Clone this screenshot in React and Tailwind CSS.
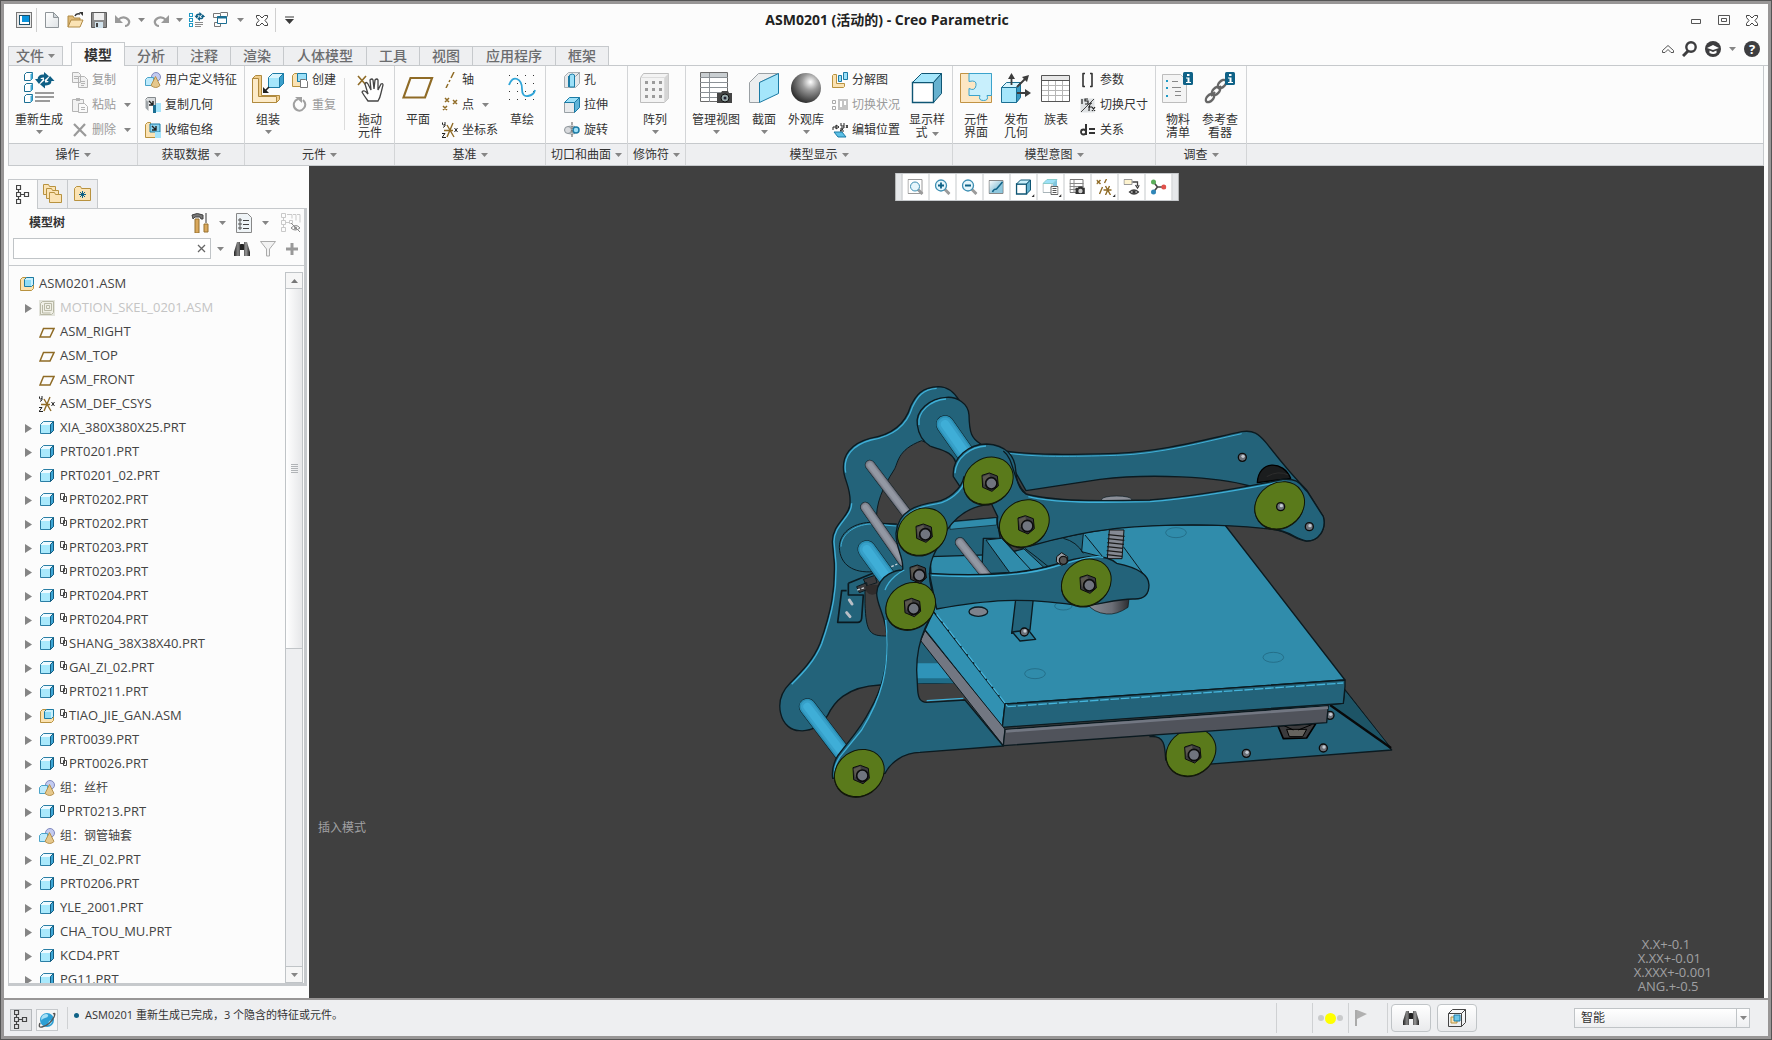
import React from "react";

const SANS = "font-['Open_Sans','Noto_Sans_CJK_SC',sans-serif]";

/* ---------- icon helpers ---------- */
const Svg = ({ w = 16, h = 16, children }) => (
  <svg width={w} height={h} viewBox={`0 0 ${w} ${h}`} className="shrink-0" aria-hidden="true" fill="none">
    {children}
  </svg>
);

const Caret = ({ dark }) => (
  <svg width="7" height="4" viewBox="0 0 7 4" className="shrink-0" aria-hidden="true">
    <path d="M0 0h7L3.5 4z" fill={dark ? "#3a3a3a" : "#858585"} />
  </svg>
);

const MiniCube = ({ x = 0, y = 0 }) => (
  <g>
    <path d={`M${x + 0.5} ${y + 2.5}l2-2h6v6l-2 2h-6z`} fill="#fff" stroke="#1b6f93" />
    <path d={`M${x + 6.5} ${y + 2.5}l2-2v6l-2 2z`} fill="#3fa9d6" />
  </g>
);

const Cycle = ({ x = 0, y = 0, s = 1 }) => (
  <g transform={`translate(${x} ${y}) scale(${s})`}>
    <path d="M3 8V6Q3 3 7 3h2" stroke="#0f5f85" strokeWidth="2.8" />
    <path d="M8 -1l5 4.200L8 7.500zM-1 6h8L3 11z" fill="#0f5f85" />
    <path d="M14 6v2q0 3-4 3H8" stroke="#0f5f85" strokeWidth="2.8" />
    <path d="M9 7v8.500L4 11.200zM10.500 8h8L14 3z" fill="#0f5f85" />
  </g>
);

const AppIcon = () => (
  <Svg>
    <rect x="0.5" y="0.5" width="15" height="15" fill="#e9e9e9" stroke="#777" />
    <rect x="3.5" y="3.5" width="10" height="9" fill="#fff" stroke="#1c4f69" />
    <rect x="6" y="4" width="7" height="6" fill="#0a94dd" />
  </Svg>
);
const NewIcon = () => (
  <Svg w={14}>
    <path d="M.5.5h8l5 5v10H.5z" fill="url(#pg)" stroke="#8f9599" />
    <path d="M8.500.5v5h5z" fill="#cfd5d9" stroke="#8f9599" />
  </Svg>
);
const OpenIcon = () => (
  <Svg w={17}>
    <path d="M1 15V4h5l1 2h6v3" fill="#dfba77" stroke="#b08a45" />
    <path d="M1 15l3-7h12l-3 7z" fill="#fbe3b4" stroke="#b08a45" />
    <path d="M8 4q1-3 5-2" stroke="#333" strokeWidth="1.400" />
    <path d="M12 0h4v4z" fill="#333" />
  </Svg>
);
const SaveIcon = () => (
  <Svg>
    <path d="M.5.5h15v15H.5z" fill="#8d8d8d" stroke="#5c5c5c" />
    <rect x="3" y="1" width="10" height="7" fill="#f0f0f0" />
    <rect x="4" y="10" width="8" height="6" fill="#d3e4ee" />
    <rect x="5" y="11" width="2" height="4" fill="#444" />
  </Svg>
);
const UndoIcon = ({ flip }) => (
  <svg width="16" height="16" viewBox="0 0 16 16" className={flip ? "shrink-0 -scale-x-100" : "shrink-0"} aria-hidden="true" fill="none">
    <path d="M3 8q4-4 8-2t3 5q-1 3-4 3" stroke="#9a9a9a" strokeWidth="2.200" />
    <path d="M0 3v8h8z" fill="#9a9a9a" />
  </svg>
);
const RegenSmall = () => (
  <Svg w={16}>
    {[1, 6, 11].map((y) => <rect key={y} x=".5" y={y + 0.5} width="3" height="3" stroke="#1f9ac6" fill="#fff" />)}
    <Cycle x={6} y={0.5} s={0.55} />
    <path d="M6 10.500h8M6 12.500h8M6 14.500h6" stroke="#8a8a8a" />
  </Svg>
);
const WindowsIcon = () => (
  <Svg>
    <path d="M.5 1.500h7v4h-7zM1.500 10.500h6v4h-6zM7.500.5h7v4" stroke="#777" />
    <path d="M4.500 4.500h9v7h-9z" fill="#fff" stroke="#1b6f93" />
    <path d="M4 5.500h10" stroke="#1b6f93" strokeWidth="2" />
  </Svg>
);
const OutlineX = () => (
  <Svg w={12} h={11}>
    <path d="M.5.500h3l2.500 2.500L8.500.5h3v2L9 5.500l2.500 3v2h-3L6 8l-2.500 2.500h-3v-2L3 5.500l-2.500-3z" stroke="#444" fill="#fff" />
  </Svg>
);

/* ---------- ribbon icons ---------- */
const RegenBig = () => (
  <Svg w={32} h={32}>
    <MiniCube x={1} y={0} /><MiniCube x={1} y={11} /><MiniCube x={1} y={22} />
    <Cycle x={13} y={1} />
    <path d="M12 21h19M12 25h19M12 29h15" stroke="#9b9b9b" strokeWidth="2" />
  </Svg>
);
const CopyIcon = () => (
  <Svg><path d="M.5.5h6l2 2v8h-8zM6.500 4.500h6l3 3v8h-9z" fill="#f2f2f2" stroke="#b5b5b5" /><path d="M2 4.500h4M2 6.500h4M9 9.500h4M9 11.500h4M9 13.500h3" stroke="#b5b5b5" /></Svg>
);
const PasteIcon = () => (
  <Svg><path d="M.5 2.500h11v12H.5z" fill="#f2f2f2" stroke="#b5b5b5" /><path d="M4 1h4v3H4z" fill="#b5b5b5" /><path d="M6.500 6.500h6l3 3v6h-9z" fill="#fafafa" stroke="#b5b5b5" /><path d="M9 10.500h4M9 12.500h4" stroke="#b5b5b5" /></Svg>
);
const DeleteIcon = () => <Svg><path d="M2 2l12 12M13 2L2 14" stroke="#9a9a9a" strokeWidth="2.200" /></Svg>;
const UdfIcon = () => (
  <Svg>
    <circle cx="11" cy="5" r="4.500" fill="#c3cbf0" stroke="#8089bd" />
    <path d="M.5 7.500l2-2h6v6l-2 2h-6z" fill="#bdeafc" stroke="#4aa3c8" />
    <path d="M10.500 4.500l4.500 9q-4 4-9 0z" fill="#e6c88c" stroke="#b6914c" />
  </Svg>
);
const CopyGeomIcon = () => (
  <Svg><path d="M.5 2.500l2-2h8v10" fill="#d8dbdd" stroke="#84898c" /><path d="M.5 2.500V11l3 3V5" fill="#9da3a7" /><path d="M4 4l4 4m0-4v4H4" stroke="#222" strokeWidth="1.400" /><path d="M8 8h3v8H8z" fill="#1b6f93" /><path d="M11 6h5v9h-5z" fill="#a5e4fb" /></Svg>
);
const ShrinkIcon = () => (
  <Svg><path d="M.5 2.500l2-2h3v9h9v4l-2 2H.5z" fill="#fbe3b4" stroke="#b8923f" /><path d="M5 2h10v8H5z" fill="#8cd3ee" stroke="#1b7ba5" /><path d="M7 4l4 4m0-4v4H7" stroke="#222" strokeWidth="1.400" /><path d="M10 10h6v6h-6z" fill="#a5e4fb" /></Svg>
);
const AssembleBig = () => (
  <Svg w={32} h={32}>
    <path d="M.5 6.500l3-3h6v20h18v4l-3 3H.5z" fill="#f0cd8c" stroke="#b08a3e" />
    <path d="M.5 6.500h6v18h18v6H.5z" fill="#fdebc8" stroke="#b08a3e" />
    <path d="M16.500 5.500l4-4h11v10l-4 4h-11z" fill="#d8f4fd" stroke="#1b7ba5" />
    <path d="M17 6h10v9H17z" fill="#a5e6fb" />
    <path d="M27.500 5.500l4-4v10l-4 4z" fill="#3ba0cc" stroke="#1b7ba5" />
    <path d="M17 15l-4 4" stroke="#222" strokeWidth="1.600" /><path d="M11 15v6h6z" fill="#222" />
  </Svg>
);
const CreateIcon = () => (
  <Svg><path d="M.5 3.500l2-2h3v8h7v4l-2 1H.5z" fill="#fbe3b4" stroke="#b8923f" /><path d="M5.500 1.500h9v8h-9z" fill="#9ce0f8" stroke="#1b7ba5" /><path d="M8.500 7.500h5l2 2v6h-7z" fill="#fff" stroke="#777" /></Svg>
);
const RepeatIcon = () => (
  <Svg><path d="M11 3q4 4 1 8t-7 2-3-7q1-3 4-4" stroke="#a0a0a0" strokeWidth="2" /><path d="M3 0h7v6z" fill="#a0a0a0" /></Svg>
);
const DragBig = () => (
  <Svg w={32} h={32}>
    <path d="M4 4l8 9M12 4l-8 9" stroke="#8f6b26" strokeWidth="1.600" />
    <path d="M14 29q-5-7-6-9 2-3 6 2l-3-10q1-3 3 0l3 6-1-10q2-2 3 0l1 9 1-9q2-2 3 0v10l3-6q2-1 2 1l-2 8q-1 5-3 8h-8z" fill="#fff" stroke="#444" strokeWidth="1.300" />
  </Svg>
);
const PlaneBig = () => <Svg w={32} h={32}><path d="M8.500 6H30l-7 19.500H1.500z" stroke="#8f6b26" strokeWidth="2.200" /></Svg>;
const AxisIcon = () => <Svg><path d="M12 0L9 6M8 8l-1 2M6 12l-2 4" stroke="#8f6b26" strokeWidth="1.500" /></Svg>;
const tinyX = (x, y) => `M${x} ${y}l4 4m0-4l-4 4`;
const PointIcon = () => <Svg><path d={tinyX(3, 1) + tinyX(11, 3) + tinyX(1, 9)} stroke="#8f6b26" strokeWidth="1.500" /></Svg>;
const CsysIcon = () => (
  <Svg>
    <path d="M2 8.500h9M5 15l6-14M5 3l7 12" stroke="#8f6b26" strokeWidth="1.400" />
    <path d="M.5.5v2q1 1 2.500 0M3 0v4L1 5.500M0 11.500h3L0 15.500h4M12.500 6l3 4m0-4l-3 4" stroke="#222" />
  </Svg>
);
const SketchBig = () => (
  <Svg w={28} h={32}>
    {[1, 9, 17, 25].flatMap((x) => [3, 11, 19, 27].map((y) => <rect key={x + "-" + y} x={x} y={y} width="1" height="1" fill="#333" />))}
    <path d="M1 13Q4 5 9 7t5 10 6 7 7-6" stroke="#2fa5d8" strokeWidth="1.800" />
  </Svg>
);
const HoleIcon = () => (
  <Svg><path d="M.5 4.500l4-4h11v11l-4 4H.5z" fill="#e6e8ea" stroke="#a9afb3" /><path d="M4.500 4v11M10.500 4v11" stroke="#1b7ba5" /><path d="M5.500 3v12h5V3q-2-2-5 0" fill="#9ce0f8" stroke="#1b7ba5" /><path d="M11.500 4.500l4-4" stroke="#8d9499" /></Svg>
);
const ExtrudeIcon = () => (
  <Svg><path d="M.5 5.500h10v10H.5z" fill="#e8eaec" stroke="#98a0a5" /><path d="M.5 5.500l5-5h10l-5 5z" fill="#9ce0f8" stroke="#1b7ba5" /><path d="M10.500 5.500l5-5v10l-5 5z" fill="#5fb4d8" stroke="#1b7ba5" /></Svg>
);
const RevolveIcon = () => (
  <Svg><path d="M4 4.500q4-1 7 0M4 11.500q4 1 7 0" stroke="#8d9499" /><circle cx="4" cy="8" r="3.500" fill="#d8dadd" stroke="#8d9499" /><circle cx="12" cy="8" r="3" fill="#9ce0f8" stroke="#1b7ba5" strokeWidth="1.500" /><path d="M8 0v16" stroke="#555" strokeDasharray="3 1" /></Svg>
);
const PatternBig = () => (
  <Svg w={32} h={32}>
    <path d="M1.500 5.500l3-4h25v25l-4 4h-24z" fill="#f3f3f3" stroke="#bdbdbd" /><path d="M25.500 5.500l4-4v25l-4 4z" fill="#d5d5d5" /><path d="M1.500 5.500h24v25" stroke="#dcdcdc" />
    {[6, 13, 20].flatMap((x) => [9, 16, 23].map((y) => <rect key={x + "-" + y} x={x} y={y} width="3" height="3" fill="#9b9b9b" />))}
  </Svg>
);
const Camera = ({ x, y }) => (
  <g transform={`translate(${x} ${y})`}>
    <path d="M0 3h4l1-2h6l1 2h3v10H0z" fill="#454545" /><circle cx="8" cy="8" r="4" fill="#9aa" stroke="#111" /><circle cx="8" cy="8" r="1.500" fill="#223" />
  </g>
);
const ViewMgrBig = () => (
  <Svg w={34} h={32}>
    <path d="M1.500.5h27v29h-27z" fill="#fff" stroke="#6b6b6b" /><path d="M2 1h26v4H2z" fill="#c9ced1" />
    <path d="M1 5.500h28M1 10.500h28M1 15.500h28M1 20.500h28M1 25.500h28M10.500 1v29" stroke="#8b9196" />
    <Camera x={18} y={18} />
  </Svg>
);
const SectionBig = () => (
  <Svg w={32} h={32}><path d="M1.500 10.500l9-9h20l-19 9v20h-10z" fill="#eceeef" stroke="#9aa0a4" /><path d="M11.500 10.500l19-9v20l-19 9z" fill="#a5e6fb" stroke="#1b7ba5" /></Svg>
);
const SphereBig = () => <Svg w={32} h={32}><circle cx="16" cy="16" r="15" fill="url(#sph)" /></Svg>;
const ExplodeIcon = () => (
  <Svg><path d="M.5 3.500l1-1h3v9h8v3l-1 1H.5z" fill="#fbe3b4" stroke="#b8923f" /><path d="M6.500 3.500h3v6h-3zM11.500.5h4v7h-4z" fill="#9ce0f8" stroke="#1b7ba5" /></Svg>
);
const StateIcon = () => (
  <Svg><path d="M.5 3.500h3v3h-3zM.5 9.500h3v3h-3z" stroke="#aaa" /><path d="M6 2h10v11H6z" fill="#c4c4c4" /><path d="M8 4h2v6H8zM12 4h2v4h-2z" fill="#fff" /></Svg>
);
const EditPosIcon = () => (
  <Svg><path d="M1 8V5h4M4 3l3 2-3 2zM9 1v3h3V1m0 3v2H9M14 3l2 3m0-3l-2 3M8 7h3L8 9h4" stroke="#222" /><path d="M2 10h8l4 5H6z" fill="#5cc0e6" stroke="#1b7ba5" /></Svg>
);
const CubeBig = () => (
  <Svg w={32} h={32}><path d="M1.500 10.500h21v20h-21z" fill="#fff" stroke="#0f5674" strokeWidth="1.400" /><path d="M1.500 10.500l9-9h20l-8 9z" fill="#a5e6fb" stroke="#0f5674" /><path d="M22.500 10.500l8-9v20l-8 9z" fill="#66b1cf" stroke="#0f5674" /></Svg>
);
const PuzzleBig = () => (
  <Svg w={32} h={32}><path d="M.5 1.500h31v29H.5z" fill="#fde7c3" stroke="#c19344" /><path d="M9 1.500h22.500v22H27q2 5-3.500 5t-3.500-5H9v-7q6 3 7-3t-7-4z" fill="#c8effc" stroke="#3ba3cc" /></Svg>
);
const PublishBig = () => (
  <Svg w={32} h={32}><path d="M1.500 15.500h15v15h-15z" fill="#a5e6fb" stroke="#1b6f93" /><path d="M1.500 15.500l5-5h14l-4 5z" fill="#d8f4fd" stroke="#1b6f93" /><path d="M16.500 15.500l4-5v15l-4 5z" fill="#3798c2" stroke="#1b6f93" /><path d="M11.500 13V4M17 15L26 6M17 21h10" stroke="#3d3d3d" strokeWidth="1.800" /><path d="M8 7l3.500-6L15 7zM22 5l7-2-2 7zM25 17l6 4-6 4z" fill="#3d3d3d" /></Svg>
);
const TableBig = () => (
  <Svg w={32} h={32}><path d="M1.500 3.500h28v26h-28z" fill="#fff" stroke="#555" /><path d="M2 4h27v4H2z" fill="#e8e8e8" /><path d="M1 8.500h28" stroke="#555" /><path d="M2 13.500h27M2 18.500h27M2 23.500h27M8.500 9v20M15.500 9v20M22.500 9v20" stroke="#b5b5b5" /></Svg>
);
const ParamIcon = () => <Svg><path d="M5 1.500H3v13h2M10 1.500h2v13h-2" stroke="#333" strokeWidth="1.600" strokeLinejoin="round" /></Svg>;
const SwitchDimIcon = () => (
  <Svg><path d="M.5 1.500h14v14H.5z" fill="#dfe2e4" /><path d="M1 15L14 2" stroke="#444" /><path d="M2 2v5M8 2H5v2h3v3H5M12 6q-3 0-3 8M8 10h4M12 10l3 4m0-4l-3 4" stroke="#222" strokeWidth="1.200" /></Svg>
);
const RelationIcon = () => <Svg><path d="M6 2v11M9 7h6M9 11h6" stroke="#333" strokeWidth="2" /><circle cx="3.500" cy="10" r="2.500" stroke="#333" strokeWidth="1.800" /></Svg>;
const InfoBadge = () => (<g><rect x="21" y="0" width="10" height="13" rx="1.500" fill="#0f6287" /><path d="M25 2h2.500v2H25zM24 5.500h3.500V10H29v1h-5v-1h1.500V6.500H24z" fill="#fff" /></g>);
const BomBig = () => (
  <Svg w={32} h={32}><path d="M.5 2.500h18l6 6v22H.5z" fill="#f4f4f4" stroke="#bdbdbd" /><path d="M4 8h2v2H4zM4 15h2v2H4zM4 23h2v2H4z" fill="#1f9ac6" /><path d="M10 9.500h6M10 15.500h9M13 19.500h6M13 23.500h6" stroke="#888" /><InfoBadge /></Svg>
);
const ChainBig = () => (
  <Svg w={32} h={32}><g stroke="#666" strokeWidth="2.400"><ellipse cx="6" cy="26" rx="5" ry="3" transform="rotate(-45 6 26)" /><ellipse cx="12" cy="19" rx="5" ry="3" transform="rotate(-45 12 19)" /><ellipse cx="18" cy="12" rx="5" ry="3" transform="rotate(-45 18 12)" /><path d="M7 24l4-4M14 17l3-3" /></g><InfoBadge /></Svg>
);

/* ---------- tree icons ---------- */
const TreePart = () => (
  <Svg><path d="M1.500 4.500l3-3h10v9l-3 3h-10z" fill="#eefaff" stroke="#2b7fa6" /><path d="M2 5h9v8H2z" fill="#a9e9fc" /><path d="M11.500 4.500l3-3v9l-3 3z" fill="#3da6d6" stroke="#155d80" /></Svg>
);
const TreeAsm = () => (
  <Svg><path d="M1.500 3.500l2-2h11v11l-2 2h-11z" fill="#fbe2b0" stroke="#b8923f" /><path d="M5.500 3.500l2-2h7v7l-2 2h-7z" fill="#c9f0fc" stroke="#1b7ba5" /><path d="M6 4h6v6H6z" fill="#8fdcf6" /></Svg>
);
const TreeSkel = () => (
  <Svg><path d="M0 0h16v16H0z" fill="#e3e4dc" /><path d="M1.500 3.500l2-2h11v11l-2 2h-11z" stroke="#b9b9a6" fill="#f0f0e6" /><path d="M5.500 3.500h7v7h-7zM7.500 5.500h3v3h-3zM3.500 5v8h8" stroke="#b9b9a6" /></Svg>
);
const TreePlane = () => <Svg><path d="M4.500 4.500H15l-4 8.500H1z" stroke="#8f6b26" strokeWidth="1.500" /></Svg>;

const HierIcon = ({ c = "#444" }) => (
  <Svg w={14} h={20}><path d="M.5.5h4v4h-4zM.5 7.500h4v4h-4zM.5 14.500h4v4h-4zM8.500 7.500h4v4h-4zM2.500 5v2M2.500 12v2M5 9.500h3" stroke={c} strokeWidth="1.200" /></Svg>
);
const FolderShape = ({ x, y }) => <path d={`M${x} ${y}h5l1 2h6v8H${x}z`} fill="#fbe3b4" stroke="#b8923f" />;
const FoldersIcon = () => <Svg w={20} h={20}><FolderShape x={0.5} y={0.5} /><FolderShape x={3.5} y={4.5} /><FolderShape x={6.5} y={8.5} /></Svg>;
const FavIcon = () => <Svg w={18} h={18}><path d="M.5 15.500v-12l2-2h4l1 2h9v12z" fill="#fbe3b4" stroke="#b8923f" /><path d="M8.500 6v7M5 9.500h7M6 7l5 5M11 7l-5 5" stroke="#0f6287" /></Svg>;
const ToolsIcon = () => <Svg w={18} h={20}><path d="M1 2q5-3 11 0v4h-2L9 4H4L2 6z" fill="#777" stroke="#444" /><path d="M4 6h4v14H4z" fill="#d9a85c" stroke="#96702f" /><path d="M15 0v10" stroke="#777" strokeWidth="1.500" /><path d="M13 11h4v8h-4z" fill="#d9a85c" stroke="#96702f" /></Svg>;
const ListDocIcon = () => <Svg w={16} h={20}><path d="M.5.5h11l4 4v15H.5z" fill="#eff4f7" stroke="#888" /><path d="M3 6h2v2H3zM3 10h2v2H3zM3 14h2v2H3z" stroke="#555" /><path d="M7 7.500h6M7 11.500h6M7 15.500h6" stroke="#444" /></Svg>;
const HideTreeIcon = () => <Svg w={20} h={20}><path d="M.5.5h4v4h-4zM.5 7.500h4v4h-4zM.5 14.500h4v4h-4zM8.500 7.500h3v3h-3zM2.500 5v2M2.500 12v2M5 9.500h3M6 1.500h5v4M12 1.500h3v6M16 1.500h3v8" stroke="#c9c9c9" /><path d="M10 15q5-5 9 0-5 4-9 0M10 10l9 9" stroke="#888" /><circle cx="14.500" cy="15" r="1.500" fill="#888" /></Svg>;
const Binoculars = () => (
  <Svg><path d="M3 1h3v2h4V1h3l3 10v4h-6V9H6v6H0v-4z" fill="url(#bin)" /><path d="M6 4h4v5H6z" fill="#222" /></Svg>
);
const FunnelIcon = () => <Svg><path d="M.5.5h15L9.500 8v7h-3V8z" fill="#f2f2f2" stroke="#aaa" /></Svg>;
const PlusIcon = () => <Svg w={12} h={12}><path d="M6 0v12M0 6h12" stroke="#999" strokeWidth="3" /></Svg>;
const GlobeIcon = () => (
  <Svg w={18} h={18}><circle cx="9" cy="9" r="7" fill="#2d9fd4" /><path d="M5 4q4-2 5 0t-3 3-3 3q-2-3 1-6zM11 10q4-2 3 1t-4 3z" fill="#a5e0f6" /><path d="M15 3Q18 1 16 6 12 14 4 16 0 17 2 12" stroke="#555" strokeWidth="1.400" /></Svg>
);

/* ---------- view toolbar icons ---------- */
const Lens = ({ children }) => (<g><path d="M10 10l5 5" stroke="#9b9b9b" strokeWidth="3" /><circle cx="6.500" cy="6.500" r="5.500" fill="#e6f6fc" stroke="#3d8fb3" strokeWidth="1.300" />{children}</g>);
const ViewFit = () => <Svg><path d="M.5.5h14v14H.5z" stroke="#9a9a9a" /><path d="M10 10l5 5" stroke="#9b9b9b" strokeWidth="3" /><circle cx="7.500" cy="7.500" r="4.500" fill="#e6f6fc" stroke="#3d8fb3" /></Svg>;
const ViewIn = () => <Svg><Lens><path d="M3.500 6.500h6M6.500 3.500v6" stroke="#0f6287" strokeWidth="1.800" /></Lens></Svg>;
const ViewOut = () => <Svg><Lens><path d="M3.500 6.500h6" stroke="#0f6287" strokeWidth="1.800" /></Lens></Svg>;
const ViewRepaint = () => <Svg><path d="M.5 1.500h14v13H.5z" fill="url(#rp)" stroke="#888" /><path d="M1 14q4 0 6-3l7-8v11z" fill="#8fc7dd" /><path d="M4 13q1-3 4-3l6-7" stroke="#0f6287" strokeWidth="1.500" /></Svg>;
const ViewCube = () => <Svg><path d="M1 5h10v10H1z" fill="#fff" stroke="#0f5674" strokeWidth="1.400" /><path d="M1 5l4-4h10l-4 4z" fill="#c9effb" stroke="#0f5674" /><path d="M11 5l4-4v10l-4 4z" fill="#66b1cf" stroke="#0f5674" /></Svg>;
const ViewSaved = () => <Svg><path d="M.5 4.500h9v9h-9z" fill="#fff" stroke="#a9b4b9" /><path d="M.5 4.500l4-4h10l-4 4z" fill="#9ce0f8" stroke="#8cc" /><path d="M10.500 4.500l4-4v9l-4 4z" fill="#7fc4de" /><path d="M8.500 7.500h7v8h-7z" fill="#fff" stroke="#666" /><path d="M10 9.500h4M10 11.500h4M10 13.500h4" stroke="#555" /></Svg>;
const ViewMgr = () => <Svg><path d="M.5.5h13v13H.5z" fill="#fff" stroke="#777" /><path d="M0 4.500h14M0 7.500h14M0 10.500h14M4.500 1v13" stroke="#888" /><g transform="translate(6 7) scale(.62)"><path d="M0 3h4l1-2h6l1 2h3v10H0z" fill="#333" /><circle cx="8" cy="8" r="3.500" fill="#ccc" /></g></Svg>;
const ViewDatum = () => <Svg><path d={tinyX(0, 1)} stroke="#8f6b26" strokeWidth="1.500" /><path d="M10 0L8 4M6 8L3 15M7 11h8M9 16l4-9M9 7l5 9" stroke="#8f6b26" strokeWidth="1.400" /></Svg>;
const ViewAnno = () => <Svg><path d="M.5.5h8v5h-8z" fill="#fdf3cf" stroke="#999" /><path d="M9 3h5v4M12 6l2 3 2-3" stroke="#444" strokeWidth="1.300" /><path d="M6 13q4.500-4 9 0-4.500 4-9 0z" fill="#fff" stroke="#444" strokeWidth="1.300" /><circle cx="10.500" cy="13" r="1.800" fill="#333" /></Svg>;
const ViewSpin = () => <Svg><path d="M3 3l4 5h6M7 8l-4 5" stroke="#444" strokeWidth="1.600" /><circle cx="3" cy="3" r="2.500" fill="#5bae5b" /><circle cx="3" cy="13" r="2.500" fill="#2f86b8" /><circle cx="13.300" cy="8" r="2.500" fill="#e0524c" /></Svg>;

/* ---------- ribbon pieces ---------- */
const Big = ({ icon, label, caret, w, wrap }) => (
  <button type="button" className={`flex shrink-0 flex-col items-center pt-[6px] text-xs text-[#333] ${w}`}>
    <span className="flex h-[41px] items-start justify-center">{icon}</span>
    {wrap ? (
      <span className={`block text-center leading-[13px] ${wrap}`}>
        {label}
        {caret && <span className="ml-1 inline-block align-middle"><Caret /></span>}
      </span>
    ) : (
      <span className="whitespace-nowrap leading-[13px]">{label}</span>
    )}
    {caret && !wrap && <span className="flex h-3 items-center"><Caret /></span>}
  </button>
);

const Row = ({ icon, label, caret, off }) => (
  <button type="button" disabled={off} className={`flex h-6 items-center gap-1 whitespace-nowrap text-xs ${off ? "text-[#9a9a9a]" : "text-[#333]"}`}>
    {icon}
    <span>{label}</span>
    {caret && <span className="pl-1"><Caret /></span>}
  </button>
);
const Col = ({ children, className = "" }) => <div className={`flex shrink-0 flex-col gap-px pt-[2px] ${className}`}>{children}</div>;

const Group = ({ label, w, children, pad = "" }) => (
  <section aria-label={label} className={`flex shrink-0 flex-col border-r border-[#d3d5d7] ${w}`}>
    <div className={`flex h-[77px] items-start ${pad}`}>{children}</div>
    <button type="button" className="flex h-[22px] items-center justify-center gap-1 whitespace-nowrap border-t border-[#c6c9cc] bg-[#eeeff1] text-xs text-[#333]">
      {label}<Caret />
    </button>
  </section>
);

const TABS = ["分析", "注释", "渲染", "人体模型", "工具", "视图", "应用程序", "框架"];

const TREE = [
  ["MOTION_SKEL_0201.ASM", "skel", true],
  ["ASM_RIGHT", "plane", false],
  ["ASM_TOP", "plane", false],
  ["ASM_FRONT", "plane", false],
  ["ASM_DEF_CSYS", "csys", false],
  ["XIA_380X380X25.PRT", "part", true],
  ["PRT0201.PRT", "part", true],
  ["PRT0201_02.PRT", "part", true],
  ["PRT0202.PRT", "part", true, 2],
  ["PRT0202.PRT", "part", true, 2],
  ["PRT0203.PRT", "part", true, 2],
  ["PRT0203.PRT", "part", true, 2],
  ["PRT0204.PRT", "part", true, 2],
  ["PRT0204.PRT", "part", true, 2],
  ["SHANG_38X38X40.PRT", "part", true, 2],
  ["GAI_ZI_02.PRT", "part", true, 2],
  ["PRT0211.PRT", "part", true, 2],
  ["TIAO_JIE_GAN.ASM", "asm", true, 2],
  ["PRT0039.PRT", "part", true],
  ["PRT0026.PRT", "part", true, 2],
  ["组：丝杆", "group", true],
  ["PRT0213.PRT", "part", true, 1],
  ["组：钢管轴套", "group", true],
  ["HE_ZI_02.PRT", "part", true],
  ["PRT0206.PRT", "part", true],
  ["YLE_2001.PRT", "part", true],
  ["CHA_TOU_MU.PRT", "part", true],
  ["KCD4.PRT", "part", true],
  ["PG11.PRT", "part", true],
];
const TREE_ICONS = { skel: <TreeSkel />, plane: <TreePlane />, csys: <CsysIcon />, part: <TreePart />, asm: <TreeAsm />, group: <UdfIcon /> };

const Mark = ({ n }) => (
  <svg width={n === 2 ? 9 : 7} height="14" viewBox={`0 0 ${n === 2 ? 9 : 7} 14`} className="shrink-0" aria-hidden="true" fill="none">
    <path d={n === 2 ? "M.5.5h4v6h-4zM3.500 3.500h3v5h-3z" : "M.5.5h4v6h-4z"} stroke="#444" />
  </svg>
);

/* ---------- 3D model ---------- */
const E = "#0b1a20";
const Nut = ({ x, y }) => (
  <g transform={`translate(${x} ${y})`}>
    <path d="M-22-20L0-27 24-18 27 12 8 28-20 16z" fill="#3d3d3f" stroke="#0c0c0c" strokeWidth="3" />
    <path d="M-20-16L0-24 4-4-16 8z" fill="#5c5850" />
    <circle cx="6" cy="4" r="17" fill="#70747e" stroke="#0c0c0c" strokeWidth="5" />
  </g>
);
const Disc = ({ x, y, nut = true }) => (
  <g>
    <ellipse cx={x - 3} cy={y + 2} rx="78" ry="68" transform={`rotate(-35 ${x} ${y})`} fill="#151a10" />
    <ellipse cx={x} cy={y} rx="78" ry="67" transform={`rotate(-35 ${x} ${y})`} fill="#5a7a1b" stroke="#101608" strokeWidth="3" />
    {nut ? <Nut x={x + 3} y={y + 4} /> : <Screw x={x + 3} y={y + 4} />}
  </g>
);
const Screw = ({ x, y }) => (
  <g><circle cx={x} cy={y} r="12" fill="#6d727a" stroke="#0c0c0c" strokeWidth="4" /><circle cx={x + 2} cy={y - 3} r="5" fill="#c4cad2" /></g>
);
const Rod = ({ x1, y1, x2, y2, w, blue }) => {
  const tones = blue ? ["#2b8fb4", "#37a0c9", "#3faed7"] : ["#6b6f79", "#858995", "#9398a3"];
  return (
    <g strokeLinecap="round">
      <path d={`M${x1} ${y1}L${x2} ${y2}`} stroke={E} strokeWidth={w + 3} />
      <path d={`M${x1} ${y1}L${x2} ${y2}`} stroke={tones[0]} strokeWidth={w} />
      <path d={`M${x1} ${y1}L${x2} ${y2}`} stroke={tones[1]} strokeWidth={w * 0.8} />
      <path d={`M${x1} ${y1}L${x2} ${y2}`} stroke={tones[2]} strokeWidth={w * 0.5} />
    </g>
  );
};

const Model = () => (
  <svg viewBox="309 166 1455 832" className="h-full w-full" role="img" aria-label="ASM0201" fill="none">
    <g transform="translate(770 370) scale(.33333)" strokeLinejoin="round">
      {/* rear side plate */}
      <path d="M568 92C550 62 530 50 505 50 455 52 438 75 422 108 405 165 365 195 300 205 245 220 212 255 222 310 228 340 243 360 240 400 240 440 187 460 187 515L193 580C195 660 185 720 150 820 130 870 95 905 60 940 30 970 25 1000 32 1030 40 1065 65 1082 88 1082 120 1085 150 1070 172 1038 190 1000 225 950 330 945L570 938 570 700 640 610 700 560 680 443 540 455 570 262Z" fill="#23637a" stroke={E} strokeWidth="4" />
      <path d="M500 55C458 58 442 80 427 112 410 168 368 199 303 210 250 224 218 258 227 308M245 400C245 442 192 464 192 515L198 580C200 660 190 722 155 822 135 872 100 908 65 943" stroke="#3fb0d8" strokeWidth="4" />
      <path d="M455 212C380 240 385 280 372 300 340 350 315 400 320 460L380 462 470 520 582 330 570 262C545 235 500 235 455 212Z" fill="#404040" stroke={E} strokeWidth="3" />
      <path d="M380 463L300 457C245 460 208 490 208 532 210 585 250 610 310 605" stroke={E} strokeWidth="3" />
      <path d="M378 468L300 462C252 465 214 493 213 530" stroke="#3fb0d8" strokeWidth="3" />
      <path d="M285 630L285 700C288 790 300 798 352 798L352 620Z" fill="#404040" stroke={E} strokeWidth="3" />
      <path d="M440 880h130v60H440z" fill="#2f93b8" /><path d="M440 925h140v14H440z" fill="#1f6c88" />
      <path d="M440 942h150v55H440z" fill="#404040" />
      {/* bracket details */}
      <path d="M235 640L320 605M235 640v35h45l-5 70q-2 12-12 12h-60l12-95h15" stroke={E} strokeWidth="5" />
      <path d="M260 650l30-12 3 20-25 10zM280 628l35-12 6 22-30 10z" fill="#3b3b3d" stroke={E} strokeWidth="3" />
      <path d="M238 690l8 12M230 728l10 12" stroke="#b9bfc6" strokeWidth="9" strokeLinecap="round" />
      <path d="M285 650Q300 640 325 645L322 670Q300 680 290 665z" fill="#2f2c2c" />
      <path d="M262 660l24-8M340 600l42-18" stroke="#cfd6db" strokeWidth="4" strokeDasharray="8 5" />
      {/* upper arm rear end */}
      <path d="M442 165C435 120 480 85 530 82 560 80 595 100 597 135 598 190 605 205 632 222L560 290C555 240 500 238 480 228 455 212 445 190 442 165Z" fill="#23637a" stroke={E} strokeWidth="4" />
      <path d="M447 165C442 125 482 90 528 87" stroke="#3fb0d8" strokeWidth="4" />
      <Rod x1={525} y1={163} x2={600} y2={270} w={52} blue />
      {/* far right arm */}
      <path d="M700 243C800 256 900 254 1040 250 1170 246 1300 210 1415 185 1450 180 1465 190 1490 220 1560 310 1590 340 1610 360L1660 440C1670 480 1645 513 1610 513 1570 510 1560 478 1480 475L1440 348C1340 320 1140 310 990 328L768 362Z" fill="#23637a" stroke={E} strokeWidth="4" />
      <path d="M710 249C800 262 900 260 1040 256 1170 252 1300 216 1415 191" stroke="#3fb0d8" strokeWidth="3" />
      <path d="M1462 338C1465 270 1540 270 1562 325Z" fill="#1b1d1e" stroke="#000" strokeWidth="4" />
      <path d="M1490 320q35-20 65-5" stroke="#2c2c2c" strokeWidth="3" />
      <Screw x={1417} y={262} />
      {/* base on the right */}
      <path d="M1140 1100C1185 1095 1185 1130 1187 1170L1310 1183 1865 1140 1725 960 1680 1000 1300 1040Z" fill="#23637a" stroke={E} strokeWidth="4" />
      <path d="M1725 960L1863 1134 1680 1005 1720 1000Z" fill="#1d5466" stroke={E} strokeWidth="3" />
      <path d="M1680 1005L1863 1134" stroke="#08090a" strokeWidth="7" />
      <path d="M1524 1068L1638 1060 1610 1104 1540 1106Z" fill="#3b3b3d" stroke="#000" strokeWidth="5" /><path d="M1550 1078h60l-12 22h-40zM1540 1066l30 14M1625 1064l-40 16" fill="#66645f" stroke="#000" strokeWidth="3" />
      <Screw x={1680} y={1036} /><Screw x={1429} y={1150} /><Screw x={1660} y={1134} />
      <Disc x={1263} y={1147} />
      {/* heating plate */}
      <path d="M540 456L680 443V465L540 478Z" fill="#308cab" stroke={E} strokeWidth="2" />
      <path d="M480 560L700 553 930 490 1100 465H1365L1725 930 705 1002 490 725Z" fill="#308cab" stroke={E} strokeWidth="4" />
      <path d="M490 725L705 1002 697 1072 465 780Z" fill="#3191b2" stroke={E} strokeWidth="4" />
      <path d="M705 1002L1725 930V950L1720 1000 697 1072Z" fill="#23637a" stroke={E} strokeWidth="4" />
      <path d="M500 733L712 1008M712 1010L1720 939" stroke="#45b4db" strokeWidth="4" strokeDasharray="26 5" />
      <path d="M465 782L705 1078 700 1127 452 812Z" fill="#727782" stroke={E} strokeWidth="3" />
      <path d="M705 1078L1675 1007 1670 1058 700 1127Z" fill="#50535b" stroke={E} strokeWidth="4" />
      <path d="M708 1084L1674 1013" stroke="#727782" strokeWidth="8" />
      <g stroke="#1e6079" strokeWidth="2"><ellipse cx="1218" cy="488" rx="31" ry="15" /><ellipse cx="1510" cy="862" rx="31" ry="15" /><ellipse cx="795" cy="911" rx="31" ry="15" /><ellipse cx="880" cy="708" rx="26" ry="12" /></g>
      <ellipse cx="625" cy="725" rx="28" ry="14" fill="#7d828c" stroke={E} strokeWidth="4" />
      {/* centre support */}
      <path d="M640 505L700 505 780 605 635 612Z" fill="#23637a" stroke={E} strokeWidth="4" />
      <path d="M648 510L695 505 785 602 722 612Z" fill="#308cab" stroke={E} strokeWidth="3" />
      <path d="M740 532L940 490 935 545 1000 562 900 590 830 600 760 535Z" fill="#23637a" stroke={E} strokeWidth="3" />
      <path d="M765 535q40 30 70 55M880 505q40 10 60 45M1060 530L1120 612M945 495L1010 575" stroke={E} strokeWidth="3" />
      <path d="M738 680L790 685 780 780 725 790Z" fill="#23637a" stroke={E} strokeWidth="4" />
      <path d="M727 786L775 780 797 808 750 813Z" fill="#2a7d9a" stroke={E} strokeWidth="4" /><Screw x={763} y={786} />
      <ellipse cx="1040" cy="388" rx="45" ry="10" fill="#8b8f98" stroke={E} strokeWidth="2" />
      <path d="M1018 480h44l-6 86h-44z" fill="#858993" stroke="#111" strokeWidth="3" />
      <path d="M1014 494l50 5M1013 506l50 5M1012 518l50 5M1011 530l48 5M1010 542l48 5M1010 554l47 5" stroke="#1b1b1b" strokeWidth="4" />
      <path d="M950 700Q1000 680 1077 686L1074 712Q1040 735 1010 732 970 728 950 700Z" fill="url(#met)" stroke="#111" strokeWidth="2" />
      <Rod x1={570} y1={517} x2={650} y2={618} w={28} />
      {/* near right arm */}
      <path d="M550 320C545 260 600 222 650 222 710 225 735 260 737 300 740 340 750 362 768 372 850 395 990 393 1140 390 1290 378 1440 348 1540 328 1590 325 1590 345 1612 365L1660 440C1670 480 1645 513 1610 513 1570 505 1560 478 1480 475 1360 462 1190 460 1040 475 950 485 850 508 780 528 720 530 675 500 683 440L665 403 570 350Z" fill="#23637a" stroke={E} strokeWidth="4" />
      <path d="M555 310C558 262 602 230 648 228M775 380C850 400 990 398 1140 395 1290 383 1440 354 1540 334" stroke="#3fb0d8" strokeWidth="4" />
      <path d="M700 243C735 270 725 330 768 372" stroke={E} strokeWidth="4" />
      <Screw x={1618} y={470} />
      {/* rods in front of the rear plate */}
      <Rod x1={300} y1={285} x2={410} y2={430} w={28} />
      <Rod x1={286} y1={411} x2={400} y2={575} w={28} />
      <Rod x1={290} y1={538} x2={360} y2={635} w={52} blue />
      <Rod x1={112} y1={1010} x2={222} y2={1155} w={48} blue />
      {/* near side plate */}
      <path d="M582 320C575 360 530 390 500 395 440 405 385 420 378 490 378 540 402 560 398 600 385 600 325 610 320 670 320 710 352 740 352 820 352 890 335 960 300 1020 270 1080 230 1120 205 1155 188 1180 185 1200 188 1225L345 1210C360 1180 400 1147 450 1147L700 1128 585 990 470 997C450 995 445 985 443 960L440 900C440 850 450 810 465 775L495 710 480 635C475 590 485 560 510 520 530 470 580 405 665 403Z" fill="#23637a" stroke={E} strokeWidth="4" />
      <path d="M585 326C580 366 533 395 502 401 445 410 391 425 384 490M403 600C392 605 358 625 345 660M347 750C364 900 330 990 275 1080L210 1160C194 1185 192 1200 194 1222M470 992L580 985" stroke="#3fb0d8" strokeWidth="4" />
      {/* lower arm */}
      <path d="M478 610C600 617 750 615 850 585 930 560 1000 545 1040 580 1090 590 1137 610 1137 645 1137 680 1115 687 1095 687 1040 685 990 705 940 708 750 680 650 690 500 717Z" fill="#23637a" stroke={E} strokeWidth="4" />
      <path d="M485 616C600 623 750 621 850 591 930 567 970 555 1000 562" stroke="#3fb0d8" strokeWidth="4" />
      <Disc x={655} y={332} /><Disc x={763} y={460} /><Disc x={457} y={485} /><Disc x={949} y={638} />
      <Disc x={422} y={708} /><Disc x={268} y={1209} /><Disc x={1529} y={406} nut={false} />
      <Nut x={442} y={612} />
      <path d="M860 560l15-12 18 12v18l-18 8-16-10z" fill="#9a9ea6" stroke="#111" strokeWidth="3" /><circle cx="880" cy="571" r="12" fill="#555" stroke="#111" strokeWidth="4" />
    </g>
  </svg>
);

const Defs = () => (
  <svg width="0" height="0" className="absolute" aria-hidden="true">
    <defs>
      <linearGradient id="pg" x1="0" y1="0" x2="1" y2="1"><stop offset="0" stopColor="#fff" /><stop offset="1" stopColor="#dfe3e6" /></linearGradient>
      <linearGradient id="bin" x1="0" y1="0" x2="1" y2="0"><stop offset="0" stopColor="#222" /><stop offset=".25" stopColor="#888" /><stop offset=".5" stopColor="#111" /><stop offset=".75" stopColor="#999" /><stop offset="1" stopColor="#222" /></linearGradient>
      <linearGradient id="rp" x1="0" y1="0" x2="1" y2="1"><stop offset="0" stopColor="#fff" /><stop offset="1" stopColor="#4fa3c4" /></linearGradient>
      <linearGradient id="met" x1="0" y1="0" x2="1" y2="0"><stop offset="0" stopColor="#8b8f98" /><stop offset=".6" stopColor="#6b6e76" /><stop offset="1" stopColor="#2c2d31" /></linearGradient>
      <radialGradient id="sph" cx=".65" cy=".3" r=".7"><stop offset="0" stopColor="#fff" /><stop offset=".4" stopColor="#9a9a9a" /><stop offset="1" stopColor="#333" /></radialGradient>
    </defs>
  </svg>
);

const IconBtn = ({ label, children, className = "" }) => (
  <button type="button" aria-label={label} className={`flex shrink-0 items-center justify-center ${className}`}>{children}</button>
);

const VIEW_TOOLS = [
  ["重新调整", <ViewFit />], ["放大", <ViewIn />], ["缩小", <ViewOut />], ["重画", <ViewRepaint />],
  ["显示样式", <ViewCube />, true], ["已保存方向", <ViewSaved />, true], ["视图管理器", <ViewMgr />],
  ["基准显示过滤器", <ViewDatum />, true], ["注释显示", <ViewAnno />], ["旋转中心", <ViewSpin />],
];

export default function App() {
  return (
    <div className={`h-screen overflow-hidden border border-[#555] bg-[#fcfcfc] ${SANS}`}>
      <Defs />
      <div className="flex h-full flex-col border-[3px] border-[#989696]">
        {/* title bar */}
        <header className="flex h-8 shrink-0 items-center">
          <div className="flex flex-1 items-center pl-3">
            <IconBtn label="Creo"><AppIcon /></IconBtn>
            <span className="mx-1 h-6 w-px bg-[#cfcfcf]" />
            <IconBtn label="新建" className="w-[22px]"><NewIcon /></IconBtn>
            <IconBtn label="打开" className="w-6"><OpenIcon /></IconBtn>
            <IconBtn label="保存" className="w-6"><SaveIcon /></IconBtn>
            <IconBtn label="撤消" className="w-6"><UndoIcon /></IconBtn>
            <IconBtn label="撤消列表" className="w-3"><Caret /></IconBtn>
            <IconBtn label="重做" className="ml-[2px] w-6"><UndoIcon flip /></IconBtn>
            <IconBtn label="重做列表" className="w-3"><Caret /></IconBtn>
            <IconBtn label="重新生成模型" className="w-6"><RegenSmall /></IconBtn>
            <IconBtn label="窗口" className="w-6"><WindowsIcon /></IconBtn>
            <IconBtn label="窗口列表" className="w-[14px]"><Caret /></IconBtn>
            <IconBtn label="关闭窗口" className="ml-[2px] w-[26px]"><OutlineX /></IconBtn>
            <span className="h-6 w-px bg-[#cfcfcf]" />
            <IconBtn label="自定义" className="ml-2 w-[10px]">
              <Svg w={9} h={8}><path d="M0 1h9" stroke="#3a3a3a" /><path d="M0 3h9L4.500 8z" fill="#3a3a3a" /></Svg>
            </IconBtn>
          </div>
          <h1 className="whitespace-nowrap text-sm font-bold text-[#222]">ASM0201 (活动的) - Creo Parametric</h1>
          <div className="flex flex-1 items-center justify-end gap-4 pr-[10px]">
            <IconBtn label="最小化" className="w-3"><Svg w={10} h={10}><path d="M.5 4.500h9v4h-9z" stroke="#555" /></Svg></IconBtn>
            <IconBtn label="最大化" className="w-3"><Svg w={12} h={10}><path d="M.5.5h11v9H.5zM3.500 3.500h5v3h-5z" stroke="#555" /></Svg></IconBtn>
            <IconBtn label="关闭" className="w-3"><OutlineX /></IconBtn>
          </div>
        </header>

        {/* ribbon tabs */}
        <nav className="flex h-[30px] shrink-0 items-stretch pl-1">
          <div className="flex items-end text-sm font-medium text-[#6b6c6e]" role="tablist">
            <button type="button" className="flex h-5 w-[55px] items-center justify-center gap-1 whitespace-nowrap border border-[#c6c9cc] bg-[#eeeff1] leading-4">文件<Caret /></button>
            <span className="w-2 self-end border-b border-[#c6c9cc]" />
            <button type="button" role="tab" aria-selected="true" className="h-6 whitespace-nowrap border border-b-0 border-[#c6c9cc] bg-[#fcfcfc] px-3 font-bold leading-4 text-[#333]">模型</button>
            {TABS.map((t) => (
              <button key={t} type="button" role="tab" aria-selected="false" className={`h-5 whitespace-nowrap border-y border-r border-[#c6c9cc] bg-[#eeeff1] leading-4 ${t.length > 2 ? "px-[13px]" : "px-3"}`}>{t}</button>
            ))}
          </div>
          <div className="flex flex-1 items-center justify-end gap-2 border-b border-[#c6c9cc] pb-[3px] pr-2">
            <IconBtn label="折叠功能区"><Svg w={12} h={8}><path d="M.5 5.500l5.500-5 5.500 5v2H9L6 4.500 3 7.500H.5z" stroke="#555" /></Svg></IconBtn>
            <IconBtn label="搜索"><Svg w={15} h={16}><circle cx="9" cy="6" r="4.700" stroke="#3d3d3f" strokeWidth="2.400" /><path d="M6 10l-5 5" stroke="#3d3d3f" strokeWidth="3" /></Svg></IconBtn>
            <IconBtn label="学习"><Svg w={16} h={16}><circle cx="8" cy="8" r="8" fill="#3d3d3f" /><path d="M2 7l6-3 6 3-6 2zM4.500 9.500v2.500q4 2 7 0V9.500L8 11z" fill="#fff" /></Svg></IconBtn>
            <Caret />
            <IconBtn label="帮助"><span className="flex size-4 items-center justify-center rounded-full bg-[#3d3d3f] text-[13px] font-bold leading-4 text-white">?</span></IconBtn>
          </div>
        </nav>

        {/* ribbon */}
        <div className="mx-1 flex shrink-0 border-x border-b border-[#c6c9cc]">
          <Group label="操作" w="w-[129px]" pad="pl-[3px]">
            <Big w="w-[54px]" icon={<RegenBig />} label="重新生成" caret />
            <Col className="pl-[6px]">
              <Row icon={<CopyIcon />} label="复制" off />
              <Row icon={<PasteIcon />} label="粘贴" caret off />
              <Row icon={<DeleteIcon />} label="删除" caret off />
            </Col>
          </Group>
          <Group label="获取数据" w="w-[107px]" pad="pl-[7px]">
            <Col>
              <Row icon={<UdfIcon />} label="用户定义特征" />
              <Row icon={<CopyGeomIcon />} label="复制几何" />
              <Row icon={<ShrinkIcon />} label="收缩包络" />
            </Col>
          </Group>
          <Group label="元件" w="w-[150px]" pad="pl-[3px]">
            <Big w="w-10" icon={<AssembleBig />} label="组装" caret />
            <Col className="pl-[4px]">
              <Row icon={<CreateIcon />} label="创建" />
              <Row icon={<RepeatIcon />} label="重复" off />
            </Col>
            <span className="ml-[8px] mt-3 h-[52px] w-px shrink-0 bg-[#dcdcdc]" />
            <Big w="w-[50px]" icon={<DragBig />} label="拖动元件" wrap="w-6" />
          </Group>
          <Group label="基准" w="w-[151px]" pad="pl-[3px]">
            <Big w="w-10" icon={<PlaneBig />} label="平面" />
            <Col className="w-16 pl-[4px]">
              <Row icon={<AxisIcon />} label="轴" />
              <Row icon={<PointIcon />} label="点" caret />
              <Row icon={<CsysIcon />} label="坐标系" />
            </Col>
            <Big w="w-10" icon={<SketchBig />} label="草绘" />
          </Group>
          <Group label="切口和曲面" w="w-[82px]" pad="pl-[18px]">
            <Col>
              <Row icon={<HoleIcon />} label="孔" />
              <Row icon={<ExtrudeIcon />} label="拉伸" />
              <Row icon={<RevolveIcon />} label="旋转" />
            </Col>
          </Group>
          <Group label="修饰符" w="w-[58px]" pad="pl-[7px]">
            <Big w="w-10" icon={<PatternBig />} label="阵列" caret />
          </Group>
          <Group label="模型显示" w="w-[267px]" pad="pl-[3px]">
            <Big w="w-[54px]" icon={<ViewMgrBig />} label="管理视图" caret />
            <Big w="w-[42px]" icon={<SectionBig />} label="截面" caret />
            <Big w="w-[42px]" icon={<SphereBig />} label="外观库" caret />
            <Col className="w-20 pl-[5px]">
              <Row icon={<ExplodeIcon />} label="分解图" />
              <Row icon={<StateIcon />} label="切换状况" off />
              <Row icon={<EditPosIcon />} label="编辑位置" />
            </Col>
            <Big w="w-10" icon={<CubeBig />} label="显示样式" wrap="w-9" caret />
          </Group>
          <Group label="模型意图" w="w-[203px]" pad="pl-[3px]">
            <Big w="w-10" icon={<PuzzleBig />} label="元件界面" wrap="w-6" />
            <Big w="w-10" icon={<PublishBig />} label="发布几何" wrap="w-6" />
            <Big w="w-10" icon={<TableBig />} label="族表" />
            <Col className="pl-[4px]">
              <Row icon={<ParamIcon />} label="参数" />
              <Row icon={<SwitchDimIcon />} label="切换尺寸" />
              <Row icon={<RelationIcon />} label="关系" />
            </Col>
          </Group>
          <Group label="调查" w="w-[91px]" pad="pl-[2px]">
            <Big w="w-10" icon={<BomBig />} label="物料清单" wrap="w-6" />
            <Big w="w-[44px]" icon={<ChainBig />} label="参考查看器" wrap="w-9" />
          </Group>
          <div className="flex flex-1 flex-col">
            <div className="flex-1" />
            <div className="h-[22px] border-t border-[#c6c9cc] bg-[#eeeff1]" />
          </div>
        </div>

        {/* workspace */}
        <main className="flex min-h-0 flex-1 pr-1">
          <aside className="flex w-[305px] shrink-0 flex-col pb-3 pl-1 pr-[2px] pt-[13px]">
            <div className="flex shrink-0 items-stretch" role="tablist">
              <button type="button" role="tab" aria-selected="true" aria-label="模型树" className="flex h-[30px] w-[30px] items-center justify-center border border-b-0 border-[#c6c9cc]"><HierIcon /></button>
              <button type="button" role="tab" aria-selected="false" aria-label="文件夹浏览器" className="flex w-[30px] items-center justify-center border-y border-r border-[#c6c9cc] bg-[#eeeff1]"><FoldersIcon /></button>
              <button type="button" role="tab" aria-selected="false" aria-label="收藏夹" className="flex w-[30px] items-center justify-center border-y border-r border-[#c6c9cc] bg-[#eeeff1]"><FavIcon /></button>
              <span className="flex-1 border-b border-[#c6c9cc]" />
            </div>
            <div className="flex min-h-0 flex-1 flex-col border-b-[3px] border-l border-r-[3px] border-[#c6c9cc]">
              <div className="flex h-7 shrink-0 items-center pl-5 pr-[3px]">
                <h2 className="flex-1 text-xs font-bold text-[#333]">模型树</h2>
                <IconBtn label="设置" className="gap-[10px]"><ToolsIcon /><Caret /></IconBtn>
                <IconBtn label="显示" className="ml-[10px] gap-[10px]"><ListDocIcon /><Caret /></IconBtn>
                <IconBtn label="隐藏" className="ml-3"><HideTreeIcon /></IconBtn>
              </div>
              <div className="flex h-[29px] shrink-0 items-start border-b border-[#c6c9cc] pl-1 pr-[6px] pt-px">
                <label className="flex h-[21px] w-0 flex-1 items-center border border-[#c0c4c7] bg-white pr-1">
                  <input type="text" aria-label="搜索模型树" className="h-full w-0 flex-1 bg-transparent px-1 text-xs outline-none" />
                  <Svg w={9} h={9}><path d="M1 1l7 7M8 1L1 8" stroke="#666" strokeWidth="1.300" /></Svg>
                </label>
                <div className="flex h-[21px] items-center gap-[10px] pl-[6px]">
                  <Caret />
                  <IconBtn label="查找"><Binoculars /></IconBtn>
                  <IconBtn label="过滤"><FunnelIcon /></IconBtn>
                  <IconBtn label="添加"><PlusIcon /></IconBtn>
                </div>
              </div>
              <div className="flex min-h-0 flex-1 pt-[6px]">
                <ul className="min-w-0 flex-1 overflow-hidden text-[13px] text-[#444]" role="tree">
                  <li role="treeitem" className="flex h-6 items-center gap-1 pl-[10px]"><TreeAsm /><span>ASM0201.ASM</span></li>
                  {TREE.map(([name, kind, open, mark], i) => (
                    <li key={i} role="treeitem" className={`flex h-6 items-center whitespace-nowrap pl-4 ${kind === "skel" ? "text-[#c4c4c4]" : ""}`}>
                      <span className="flex w-[14px] shrink-0">
                        {open && <Svg w={7} h={9}><path d="M0 0l7 4.500L0 9z" fill="#858585" /></Svg>}
                      </span>
                      {TREE_ICONS[kind]}
                      <span className={/[\u4e00-\u9fff]/.test(name) ? "flex items-center pl-[5px] text-xs" : "flex items-center pl-[5px]"}>
                        {mark && <Mark n={mark} />}
                        {name}
                      </span>
                    </li>
                  ))}
                </ul>
                <div className="mr-px flex w-[18px] shrink-0 flex-col border border-[#c0c4c7] bg-[#eeeff1]">
                  <button type="button" aria-label="向上滚动" className="flex h-4 shrink-0 items-center justify-center border-b border-[#c0c4c7] bg-[#f6f6f6]"><Svg w={7} h={4}><path d="M0 4h7L3.500 0z" fill="#777" /></Svg></button>
                  <div className="flex h-[360px] flex-col items-center justify-center gap-px border-b border-[#c0c4c7] bg-gradient-to-r from-white to-[#e6e7e9]">
                    {[0, 1, 2, 3, 4].map((n) => <span key={n} className="h-px w-[7px] bg-[#b0b3b6]" />)}
                  </div>
                  <div className="flex-1" />
                  <button type="button" aria-label="向下滚动" className="flex h-4 shrink-0 items-center justify-center border-t border-[#c0c4c7] bg-[#f6f6f6]"><Caret /></button>
                </div>
              </div>
            </div>
          </aside>

          <section className="relative min-w-0 flex-1 bg-[#404040]" aria-label="图形窗口">
            <Model />
            <div className="absolute left-1/2 top-[7px] flex h-7 -translate-x-1/2 border border-[#c6c9cc] bg-white" role="toolbar">
              <span className="w-[6px] border-r border-[#c6c9cc] bg-[#e6e8ea]" />
              {VIEW_TOOLS.map(([label, icon, more]) => (
                <button key={label} type="button" aria-label={label} className="relative flex w-[27px] items-center justify-center border-r border-[#c6c9cc]">
                  {icon}
                  {more && <span className="absolute bottom-[3px] right-[2px]"><Svg w={3} h={3}><path d="M3 0v3H0z" fill="#333" /></Svg></span>}
                </button>
              ))}
              <span className="w-[5px] bg-[#e6e8ea]" />
            </div>
            <p className="absolute bottom-[162px] left-[9px] text-xs leading-4 text-[#a0a0a3]">插入模式</p>
            <div className="absolute bottom-[5px] right-[52px] flex flex-col items-start text-[13px] leading-[14px] text-[#a0a0a3]">
              <span className="pl-2">X.X+-0.1</span>
              <span className="pl-1">X.XX+-0.01</span>
              <span>X.XXX+-0.001</span>
              <span className="pl-1">ANG.+-0.5</span>
            </div>
          </section>
        </main>

        {/* status bar */}
        <footer className="flex h-[38px] shrink-0 items-center border-t-2 border-[#989696] bg-[#eeeff1] text-xs text-[#333]">
          <IconBtn label="导航器" className="ml-[6px] mt-1 size-[22px] border border-[#b5b8bb] bg-[#e2e3e5]"><HierIcon /></IconBtn>
          <IconBtn label="浏览器" className="ml-1 mt-1 size-[22px] border border-[#c6c9cc] bg-[#f6f6f6]"><GlobeIcon /></IconBtn>
          <span className="ml-[9px] h-[22px] w-px bg-[#cfd1d3]" />
          <p className="flex min-w-0 flex-1 items-center gap-[6px] pb-[6px] pl-[6px] text-[11px]"><span className="size-[5px] shrink-0 rounded-full bg-[#0f6287]" />ASM0201 重新生成已完成，3 个隐含的特征或元件。</p>
          <div className="flex h-full shrink-0 items-center">
            <span className="h-[30px] w-9 border-l border-[#cfd1d3]" />
            <span className="flex h-[30px] w-9 items-center justify-center gap-px border-l border-[#cfd1d3]">
              <span className="size-[6px] rounded-full bg-[#c9cacb]" /><span className="size-[11px] rounded-full bg-[#ffff00]" /><span className="size-[6px] rounded-full bg-[#c9cacb]" />
            </span>
            <span className="flex h-[30px] w-10 items-center border-x border-[#cfd1d3] pl-[6px]"><Svg w={13} h={18}><path d="M1 1v16" stroke="#aaa" strokeWidth="2" /><path d="M2 1l10 4-10 5z" fill="#b0b0b0" /></Svg></span>
            <IconBtn label="搜索工具" className="ml-[3px] h-[28px] w-10 rounded-sm border border-[#c0c4c7] bg-gradient-to-b from-white to-[#e9eaec]"><Binoculars /></IconBtn>
            <IconBtn label="选择" className="ml-[6px] h-[28px] w-10 rounded-sm border border-[#c0c4c7] bg-gradient-to-b from-white to-[#e9eaec]">
              <Svg w={18} h={18}><path d="M.5 4.500l4-4h13v13l-4 4H.5zM.5 4.500h13v13M13.500 4.500l4-4" stroke="#444" /><path d="M3 8h6v6H3z" fill="#fbe3b4" stroke="#b8923f" /><path d="M6 6h6v6H6z" fill="#6cc5e8" stroke="#1b7ba5" /></Svg>
            </IconBtn>
            <span className="relative ml-[97px] mr-[18px] flex h-5 w-44">
              <select aria-label="选择过滤器" defaultValue="智能" className="h-full w-full appearance-none border border-[#c0c4c7] bg-gradient-to-b from-white to-[#eeeff1] pl-[6px] text-xs text-[#333] outline-none"><option>智能</option></select>
              <span className="pointer-events-none absolute inset-y-px right-px flex w-[13px] items-center justify-center border-l border-[#c0c4c7]"><Caret /></span>
            </span>
          </div>
        </footer>
      </div>
    </div>
  );
}
